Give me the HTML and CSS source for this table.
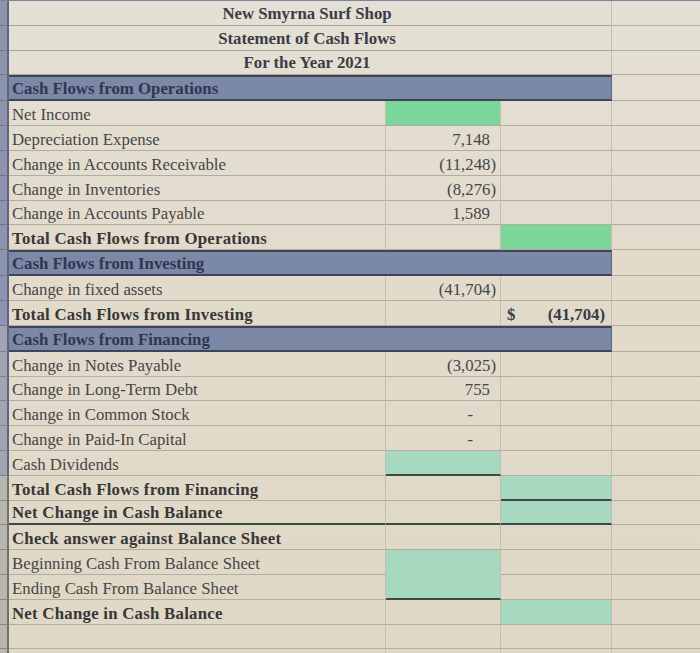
FILE: index.html
```html
<!DOCTYPE html>
<html>
<head>
<meta charset="utf-8">
<link rel="stylesheet" href="styles.css">
</head>
<body>
<div class="sheet">
  <div class="row"><div class="rh"></div><div class="c title">New Smyrna Surf Shop</div><div class="c d"></div></div>
  <div class="row"><div class="rh"></div><div class="c title">Statement of Cash Flows</div><div class="c d"></div></div>
  <div class="row"><div class="rh"></div><div class="c title">For the Year 2021</div><div class="c d"></div></div>
  <div class="row hdr"><div class="rh"></div><div class="c band">Cash Flows from Operations</div><div class="c d"></div></div>
  <div class="row"><div class="rh"></div><div class="c a">Net Income</div><div class="c b green"></div><div class="c cc"></div><div class="c d"></div></div>
  <div class="row"><div class="rh"></div><div class="c a">Depreciation Expense</div><div class="c b num pos">7,148</div><div class="c cc"></div><div class="c d"></div></div>
  <div class="row"><div class="rh"></div><div class="c a">Change in Accounts Receivable</div><div class="c b num">(11,248)</div><div class="c cc"></div><div class="c d"></div></div>
  <div class="row"><div class="rh"></div><div class="c a">Change in Inventories</div><div class="c b num">(8,276)</div><div class="c cc"></div><div class="c d"></div></div>
  <div class="row"><div class="rh"></div><div class="c a">Change in Accounts Payable</div><div class="c b num pos">1,589</div><div class="c cc"></div><div class="c d"></div></div>
  <div class="row"><div class="rh"></div><div class="c a bold">Total Cash Flows from Operations</div><div class="c b"></div><div class="c cc green"></div><div class="c d"></div></div>
  <div class="row hdr"><div class="rh"></div><div class="c band">Cash Flows from Investing</div><div class="c d"></div></div>
  <div class="row"><div class="rh"></div><div class="c a">Change in fixed assets</div><div class="c b num">(41,704)</div><div class="c cc"></div><div class="c d"></div></div>
  <div class="row"><div class="rh"></div><div class="c a bold">Total Cash Flows from Investing</div><div class="c b"></div><div class="c cc acct bold"><span>$</span><span>(41,704)</span></div><div class="c d"></div></div>
  <div class="row hdr"><div class="rh"></div><div class="c band">Cash Flows from Financing</div><div class="c d"></div></div>
  <div class="row"><div class="rh"></div><div class="c a">Change in Notes Payable</div><div class="c b num">(3,025)</div><div class="c cc"></div><div class="c d"></div></div>
  <div class="row"><div class="rh"></div><div class="c a">Change in Long-Term Debt</div><div class="c b num pos">755</div><div class="c cc"></div><div class="c d"></div></div>
  <div class="row"><div class="rh"></div><div class="c a">Change in Common Stock</div><div class="c b num dash">-</div><div class="c cc"></div><div class="c d"></div></div>
  <div class="row"><div class="rh"></div><div class="c a">Change in Paid-In Capital</div><div class="c b num dash">-</div><div class="c cc"></div><div class="c d"></div></div>
  <div class="row"><div class="rh"></div><div class="c a">Cash Dividends</div><div class="c b teal under"></div><div class="c cc"></div><div class="c d"></div></div>
  <div class="row"><div class="rh"></div><div class="c a bold">Total Cash Flows from Financing</div><div class="c b"></div><div class="c cc teal under"></div><div class="c d"></div></div>
  <div class="row"><div class="rh"></div><div class="c a bold under">Net Change in Cash Balance</div><div class="c b under"></div><div class="c cc teal under"></div><div class="c d"></div></div>
  <div class="row"><div class="rh"></div><div class="c a bold">Check answer against Balance Sheet</div><div class="c b"></div><div class="c cc"></div><div class="c d"></div></div>
  <div class="row"><div class="rh"></div><div class="c a">Beginning Cash From Balance Sheet</div><div class="c b teal nob"></div><div class="c cc"></div><div class="c d"></div></div>
  <div class="row"><div class="rh"></div><div class="c a">Ending Cash From Balance Sheet</div><div class="c b teal under"></div><div class="c cc"></div><div class="c d"></div></div>
  <div class="row"><div class="rh"></div><div class="c a bold">Net Change in Cash Balance</div><div class="c b"></div><div class="c cc teal"></div><div class="c d"></div></div>
  <div class="row"><div class="rh"></div><div class="c a"></div><div class="c b"></div><div class="c cc"></div><div class="c d"></div></div>
  <div class="row"><div class="rh"></div><div class="c a"></div><div class="c b"></div><div class="c cc"></div><div class="c d"></div></div>
</div>
</body>
</html>
```
FILE: styles.css
```css
html, body {
  margin: 0;
  padding: 0;
  background: #e2dbcc;
  overflow: hidden;
}
.sheet {
  width: 700px;
  height: 653px;
  overflow: hidden;
  border-top: 1px solid #7e8399;
  background: linear-gradient(180deg, #e5e0d5 0%, #e2dbcc 40%, #e0d8c6 100%);
  font-family: "Liberation Serif", "Times New Roman", serif;
  font-size: 16.8px;
  color: #464646;
}
.row {
  display: grid;
  grid-template-columns: 9px 377px 115px 111px 1fr;
  height: 24.8px;
}
.row.hdr { height: 26px; }
.rh {
  background: #8f94ae;
  border-bottom: 1px solid #6f7590;
  border-right: 2px solid #5d6580;
}
.row:nth-child(n+14) .rh { background: #a3a4b2; border-bottom-color: #7d8090; }
.row:nth-child(n+20) .rh { background: #b9b6ae; border-bottom-color: #8b8a86; border-right-color: #6e7170; }
.c {
  box-sizing: border-box;
  border-bottom: 1px solid #b3ada1;
  border-right: 1px solid #c4beb2;
  display: flex;
  align-items: flex-end;
  padding-bottom: 0;
  white-space: nowrap;
  overflow: hidden;
}
.a { padding-left: 3px; }
.title {
  grid-column: 2 / 5;
  justify-content: center;
  font-weight: bold;
  color: #3a3d45;
  padding-left: 0;
  padding-right: 6px;
  padding-bottom: 1px;
  border-bottom-color: #a8a398;
}
.hdr .band {
  grid-column: 2 / 5;
  background: #7b88a6;
  border-top: 2px solid #3e4557;
  border-bottom: 2px solid #3e4557;
  border-right: 1px solid #5c6680;
  font-weight: bold;
  color: #2f3750;
  padding-left: 3px;
  padding-bottom: 0;
}
.bold { font-weight: bold; color: #373737; letter-spacing: 0.25px; }
.num { justify-content: flex-end; padding-right: 4px; }
.num.pos { padding-right: 10px; }
.num.dash { padding-right: 27px; }
.green { background: #7bd699; }
.teal { background: #a7d9c0; }
.under { border-bottom: 2px solid #3e4a44; }
.nob { border-bottom-color: #a7d9c0; }
.acct { justify-content: space-between; padding-left: 6px; padding-right: 6px; color: #3a3d45; letter-spacing: 0; }
.d { border-right: none; }
```
